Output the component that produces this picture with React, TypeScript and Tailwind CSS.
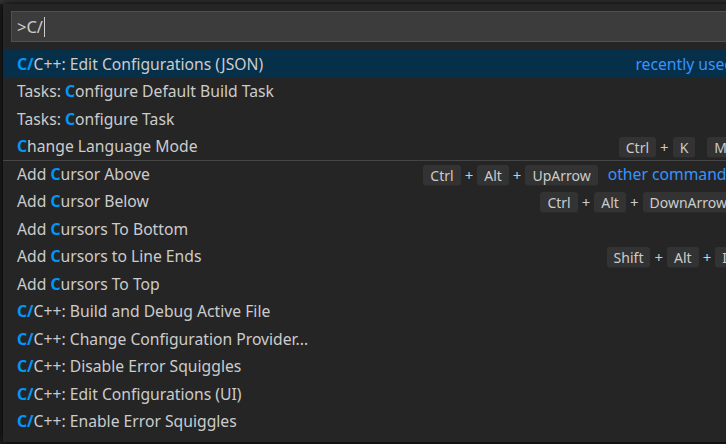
import React from 'react';

// ── Data ──────────────────────────────────────────────────────────────────────
type Right =
  | { kind: 'label'; text: string }
  | { kind: 'keys'; chords: string[][]; label?: string };

interface Item {
  hl: string;        // highlighted part
  pre?: string;      // text before highlight
  post: string;      // text after highlight
  right?: Right;
  separator?: boolean;
}

const ITEMS: Item[] = [
  { hl: 'C/', post: 'C++: Edit Configurations (JSON)', right: { kind: 'label', text: 'recently used' } },
  { pre: 'Tasks: ', hl: 'C', post: 'onfigure Default Build Task' },
  { pre: 'Tasks: ', hl: 'C', post: 'onfigure Task' },
  { hl: 'C', post: 'hange Language Mode', right: { kind: 'keys', chords: [['Ctrl', 'K'], ['M']] } },
  { pre: 'Add ', hl: 'C', post: 'ursor Above', separator: true, right: { kind: 'keys', chords: [['Ctrl', 'Alt', 'UpArrow']], label: 'other commands' } },
  { pre: 'Add ', hl: 'C', post: 'ursor Below', right: { kind: 'keys', chords: [['Ctrl', 'Alt', 'DownArrow']] } },
  { pre: 'Add ', hl: 'C', post: 'ursors To Bottom' },
  { pre: 'Add ', hl: 'C', post: 'ursors to Line Ends', right: { kind: 'keys', chords: [['Shift', 'Alt', 'I']] } },
  { pre: 'Add ', hl: 'C', post: 'ursors To Top' },
  { hl: 'C/', post: 'C++: Build and Debug Active File' },
  { hl: 'C/', post: 'C++: Change Configuration Provider...' },
  { hl: 'C/', post: 'C++: Disable Error Squiggles' },
  { hl: 'C/', post: 'C++: Edit Configurations (UI)' },
  { hl: 'C/', post: 'C++: Enable Error Squiggles' },
];

// ── Bits ──────────────────────────────────────────────────────────────────────
function Key({ k }: { k: string }) {
  return (
    <span className="h-[21px] px-[7px] flex items-center rounded-[3px] bg-[#333333] text-[#cccccc] text-[14px] shadow-[inset_0_-1px_0_#2a2a2a]">
      {k}
    </span>
  );
}

function Keys({ chords }: { chords: string[][] }) {
  return (
    <div className="flex items-center gap-[12px]">
      {chords.map((chord, ci) => (
        <div key={ci} className="flex items-center">
          {chord.map((k, i) => (
            <React.Fragment key={k}>
              {i > 0 && <span className="mx-[4px] text-[#cccccc] text-[15px]">+</span>}
              <Key k={k} />
            </React.Fragment>
          ))}
        </div>
      ))}
    </div>
  );
}

// ── Component ─────────────────────────────────────────────────────────────────
export default function App() {
  return (
    <div className="w-[726px] h-[444px] overflow-hidden bg-[#1e1e1e] font-['Noto_Sans',sans-serif]">
      <div className="h-[4px] bg-[#333333]" />

      <div className="ml-[3px] w-[739px] h-[438px] bg-[#252526] shadow-[0_0_8px_#000000]">
        {/* Input */}
        <div className="px-[8px] pt-[7px] pb-[8px]">
          <div className="h-[31px] border border-[#0e639c] bg-[#3c3c3c] flex items-center pl-[5px] pt-[1px] text-[16.5px] text-[#cccccc]">
            <span>&gt;C/</span>
            <span className="ml-[1px] w-[1px] h-[20px] bg-[#cccccc]" />
          </div>
        </div>

        {/* List */}
        <div>
          {ITEMS.map((it, idx) => (
            <div
              key={idx}
              className={`h-[27.5px] pl-[14px] pr-[8px] pt-[2px] flex items-center justify-between text-[15.7px] ${idx === 0 ? 'bg-[#062f4a]' : ''} ${it.separator ? 'border-t border-[#454545]' : ''}`}
            >
              <span className="text-[#cccccc] whitespace-nowrap">
                {it.pre}
                <span className="text-[#0097fb] font-bold">{it.hl}</span>
                {it.post}
              </span>
              {it.right && it.right.kind === 'label' && (
                <span className="text-[#3794ff] whitespace-nowrap">{it.right.text}</span>
              )}
              {it.right && it.right.kind === 'keys' && (
                <div className="flex items-center gap-[10px]">
                  <Keys chords={it.right.chords} />
                  {it.right.label && <span className="text-[#3794ff] whitespace-nowrap">{it.right.label}</span>}
                </div>
              )}
            </div>
          ))}
        </div>
      </div>
    </div>
  );
}
